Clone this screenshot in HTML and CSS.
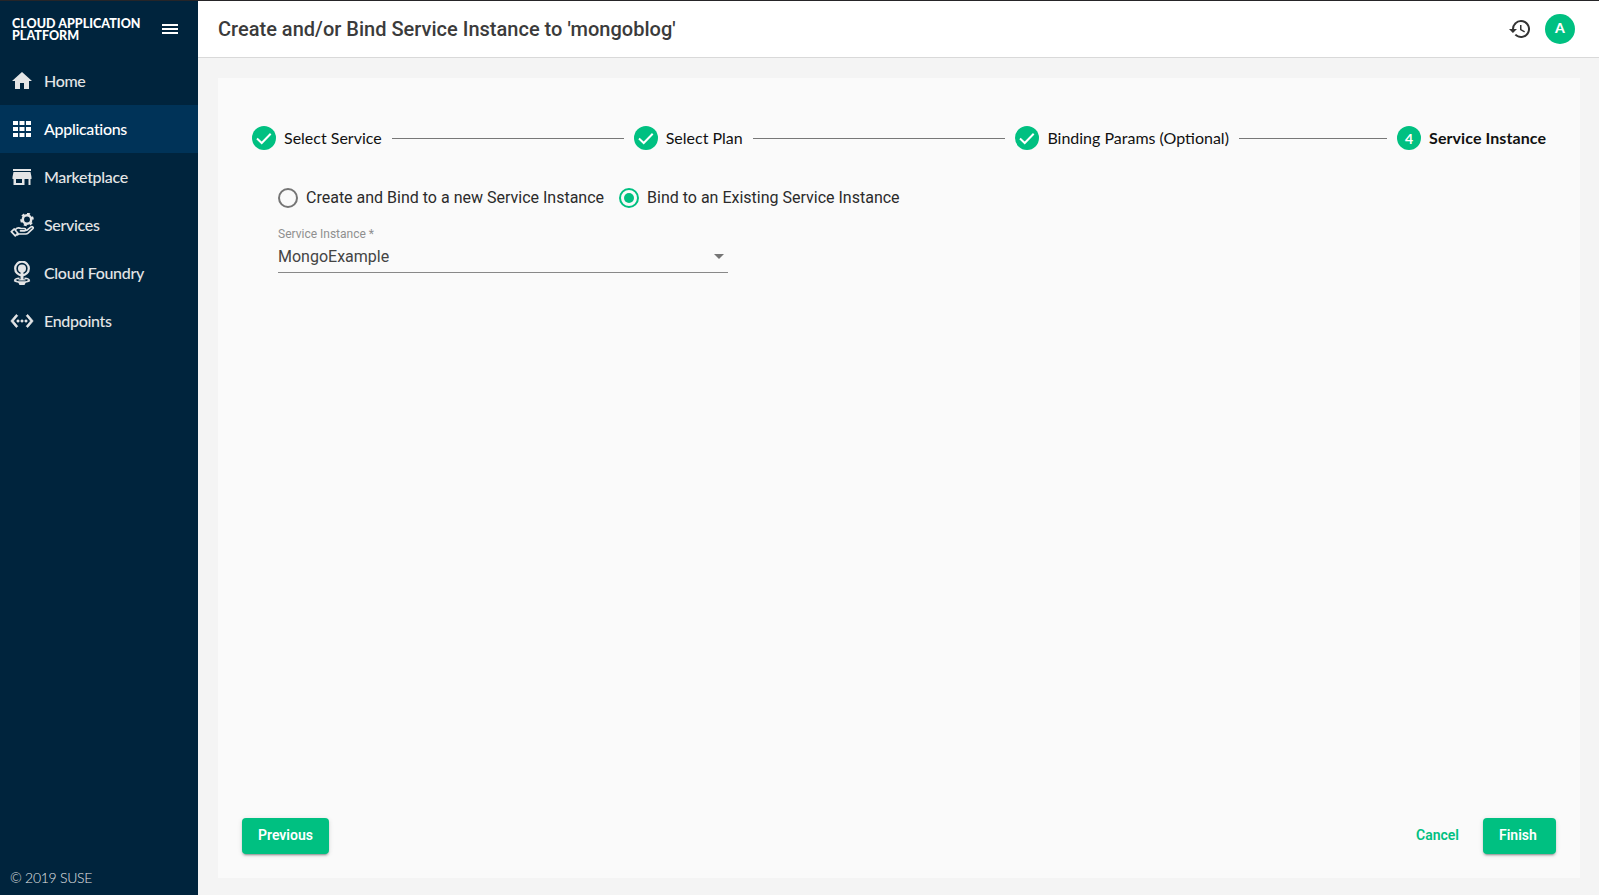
FILE: index.html
```html
<!DOCTYPE html>
<html lang="en">
<head>
<meta charset="utf-8">
<title>Cloud Application Platform</title>
<link rel="stylesheet" href="styles.css">
</head>
<body>
<div class="app">
  <aside class="sidebar">
    <div class="brand">
      <div class="brand-name"><div>CLOUD APPLICATION</div><div>PLATFORM</div></div>
      <svg class="menu-icon" width="24" height="24" viewBox="0 0 24 24"><path d="M4 18h16v-2H4v2zm0-4h16v-2H4v2zm0-6v2h16V8H4z" transform="translate(0 -1)"/></svg>
    </div>
    <nav class="nav">
      <a class="nav-item"><svg class="nav-icon" viewBox="0 0 24 24"><path d="M10 20v-6h4v6h5v-8h3L12 3 2 12h3v8z"/></svg><span>Home</span></a>
      <a class="nav-item active"><svg class="nav-icon" viewBox="0 0 24 24"><path d="M3 4h5v4H3zM9.500 4h5v4h-5zM16 4h5v4h-5zM3 10h5v4H3zM9.500 10h5v4h-5zM16 10h5v4h-5zM3 16h5v4H3zM9.500 16h5v4h-5zM16 16h5v4h-5z"/></svg><span>Applications</span></a>
      <a class="nav-item"><svg class="nav-icon" viewBox="0 0 24 24"><path d="M3 4h18v2H3zM21.500 14v-2l-1-5h-17l-1 5v2h1v6h11v-6h4v6h2v-6zM12 18H6v-4h6z"/></svg><span>Marketplace</span></a>
      <a class="nav-item"><svg class="nav-icon" viewBox="0 0 24 24"><g fill="none" stroke="currentColor" stroke-linejoin="round" stroke-linecap="round"><circle cx="17" cy="6.500" r="4.200" stroke-width="2.500"/><path stroke-width="2.600" stroke-dasharray="2.800 2.960" stroke-linecap="butt" d="M17 1a5.500 5.500 0 1 1-.01 0z"/><path stroke-width="1.700" d="M5.500 16.500C7 14.600 9 14.500 11 15.500h3.500c1.500 0 1.500 2.300 0 2.300H10.500M15.500 17.300l1.500-.2 4-3.200c1.400-.8 2.800.6 1.800 1.700l-4.800 4.600c-.8.700-1.300.8-2.200.8H8.500l-1 .8M1.300 18.600l3-2.600 3.600 4.200-2.600 2.600z"/></g></svg><span>Services</span></a>
      <a class="nav-item"><svg class="nav-icon" viewBox="0 0 24 24"><circle cx="12" cy="7.500" r="6.800" fill="none" stroke="currentColor" stroke-width="2.300"/><circle cx="12" cy="7.500" r="4"/><path d="M10.500 10h3v9h-3z"/><path fill="none" stroke="currentColor" stroke-width="1.600" d="M9.500 17.200c-3 .2-4.700 1-4.700 2 0 1.200 2.900 1.800 7.200 1.800s7.200-.6 7.200-1.800c0-1-1.700-1.800-4.700-2"/><path d="M8 21h8l-1.500 3h-5zM3.500 20l3-1v2zM20.500 20l-3-1v2zM8.500 18.300h7v1.200h-7z"/></svg><span>Cloud Foundry</span></a>
      <a class="nav-item"><svg class="nav-icon" viewBox="0 0 24 24"><path d="M7.770 6.760 6.230 5.480.82 12l5.410 6.520 1.540-1.280L3.420 12zM7 13h2v-2H7zm10-2h-2v2h2zm-6 2h2v-2h-2zm6.770-7.520-1.540 1.280L20.580 12l-4.350 5.240 1.540 1.280L23.180 12z" stroke="currentColor" stroke-width=".7"/></svg><span>Endpoints</span></a>
    </nav>
    <div class="copyright">© 2019 SUSE</div>
  </aside>
  <div class="content">
    <header class="header">
      <h1 class="title">Create and/or Bind Service Instance to 'mongoblog'</h1>
      <svg class="history" width="24" height="24" viewBox="0 0 24 24"><path d="M13 3a9 9 0 0 0-9 9H1l3.890 3.890.07.14L9 12H6a7 7 0 1 1 2.060 4.940l-1.420 1.420A9 9 0 1 0 13 3zm-1 5v5l4.280 2.540.72-1.210-3.500-2.080V8z"/></svg>
      <div class="avatar">A</div>
    </header>
    <main class="card">
      <div class="stepper">
        <div class="step"><span class="badge"><svg width="24" height="24" viewBox="0 0 24 24"><path d="M5 12.600 9.700 17 18.700 7.800"/></svg></span><span class="step-label">Select Service</span><i class="line"></i></div>
        <div class="step"><span class="badge"><svg width="24" height="24" viewBox="0 0 24 24"><path d="M5 12.600 9.700 17 18.700 7.800"/></svg></span><span class="step-label">Select Plan</span><i class="line"></i></div>
        <div class="step"><span class="badge"><svg width="24" height="24" viewBox="0 0 24 24"><path d="M5 12.600 9.700 17 18.700 7.800"/></svg></span><span class="step-label">Binding Params (Optional)</span><i class="line"></i></div>
        <div class="step current"><span class="badge">4</span><span class="step-label">Service Instance</span></div>
      </div>
      <div class="form">
        <div class="radios">
          <label class="option"><span class="radio"></span><span class="option-text">Create and Bind to a new Service Instance</span></label>
          <label class="option"><span class="radio checked"></span><span class="option-text">Bind to an Existing Service Instance</span></label>
        </div>
        <div class="field">
          <div class="field-label">Service Instance *</div>
          <div class="field-value"><span>MongoExample</span><i class="caret"></i></div>
        </div>
      </div>
      <footer class="actions">
        <button class="btn primary">Previous</button>
        <button class="btn text">Cancel</button>
        <button class="btn primary finish">Finish</button>
      </footer>
    </main>
  </div>
</div>
</body>
</html>
```
FILE: styles.css
```css
* { box-sizing: border-box; }
body { margin: 0; font-family: Roboto, sans-serif; background: #f4f4f4; }
.app { display: flex; height: 895px; border-top: 1px solid #262528; }
.sidebar { width: 198px; display: flex; flex-direction: column; background: #00243d; color: #e4e5e6; font-family: Lato, sans-serif; }
.brand { height: 56px; display: flex; align-items: center; justify-content: space-between; padding: 0 16px 0 12px; }
.brand-name { padding-top: 2px; font-size: 12.5px; line-height: 12px; letter-spacing: .03px; font-weight: 900; color: #fff; white-space: nowrap; }
.brand-name div { height: 12px; }
.menu-icon { fill: #fff; }
.nav-item { height: 48px; display: flex; align-items: center; gap: 10px; padding-left: 10px; font-size: 16px; font-weight: 500; letter-spacing: -.32px; }
.nav-item span { padding-bottom: 2px; }
.nav-item.active { background: #003358; color: #fff; }
.nav-icon { width: 24px; height: 24px; fill: currentColor; }
.copyright { margin-top: auto; padding: 0 0 8px 10px; font-size: 14px; line-height: 18px; font-weight: 300; letter-spacing: -.27px; }
.content { flex: 1; display: flex; flex-direction: column; min-width: 0; }
.header { height: 57px; display: flex; align-items: center; padding: 0 24px 0 20px; background: #fff; border-bottom: 1px solid #d9d9d9; }
.title { flex: 1; margin: 0; font-size: 20px; font-weight: 500; letter-spacing: .01px; color: #3b3b3b; }
.history { fill: #333; margin-right: 13px; }
.avatar { width: 30px; height: 30px; border-radius: 50%; background: #00c081; color: #fff; font: 900 14px/28px Lato, sans-serif; text-align: center; }
.card { flex: 1; margin: 20px 19px 17px 20px; background: #fafafa; display: flex; flex-direction: column; }
.stepper { display: flex; padding: 48px 34px 0; font-family: Lato, sans-serif; }
.step { flex: 1 1 0; min-width: 0; height: 24px; display: flex; align-items: center; font-size: 16px; color: #111; white-space: nowrap; }
.step.current { flex: none; font-weight: 700; }
.badge { width: 24px; height: 24px; border-radius: 50%; background: #00c081; color: #fff; flex: none; display: flex; align-items: center; justify-content: center; font-size: 14px; font-weight: 700; }
.badge svg { fill: none; stroke: #fff; stroke-width: 2; }
.step-label { margin: 0 10px 0 8px; padding-bottom: 2px; }
.current .step-label { margin-right: 0; letter-spacing: .08px; }
.line { flex: 1; height: 1px; margin-right: 10px; background: #777; }
.form { padding: 37px 60px 0; }
.radios { display: flex; gap: 15px; }
.option { display: flex; align-items: center; gap: 8px; height: 22px; font-size: 16px; color: #2b2b2b; }
.option-text { padding-bottom: 2px; }
.radio { width: 20px; height: 20px; border: 2px solid #757575; border-radius: 50%; display: flex; align-items: center; justify-content: center; }
.radio.checked { border-color: #00c081; }
.radio.checked::after { content: ""; width: 10px; height: 10px; border-radius: 50%; background: #00c081; }
.field { width: 450px; margin-top: 18px; border-bottom: 1px solid #888; }
.field-label { font-size: 12px; line-height: 14px; color: #8f8f8f; }
.field-value { display: flex; align-items: center; justify-content: space-between; height: 24px; margin: 3px 0 4px; padding-right: 4px; font-size: 16px; color: #444; }
.caret { border: 5px solid transparent; border-top-color: #757575; border-bottom: 0; }
.actions { display: flex; margin-top: auto; padding: 0 24px; height: 60px; }
.btn { height: 36px; padding: 0 16px 2px; border: 0; border-radius: 4px; font: 600 14px Roboto, sans-serif; }
.primary { background: #00c081; color: #fff; box-shadow: 0 3px 1px -2px rgba(0,0,0,.2), 0 2px 2px rgba(0,0,0,.14), 0 1px 5px rgba(0,0,0,.12); }
.finish { width: 73px; padding-right: 20px; }
.text { background: none; color: #00c081; margin-left: auto; margin-right: 8px; }
```
